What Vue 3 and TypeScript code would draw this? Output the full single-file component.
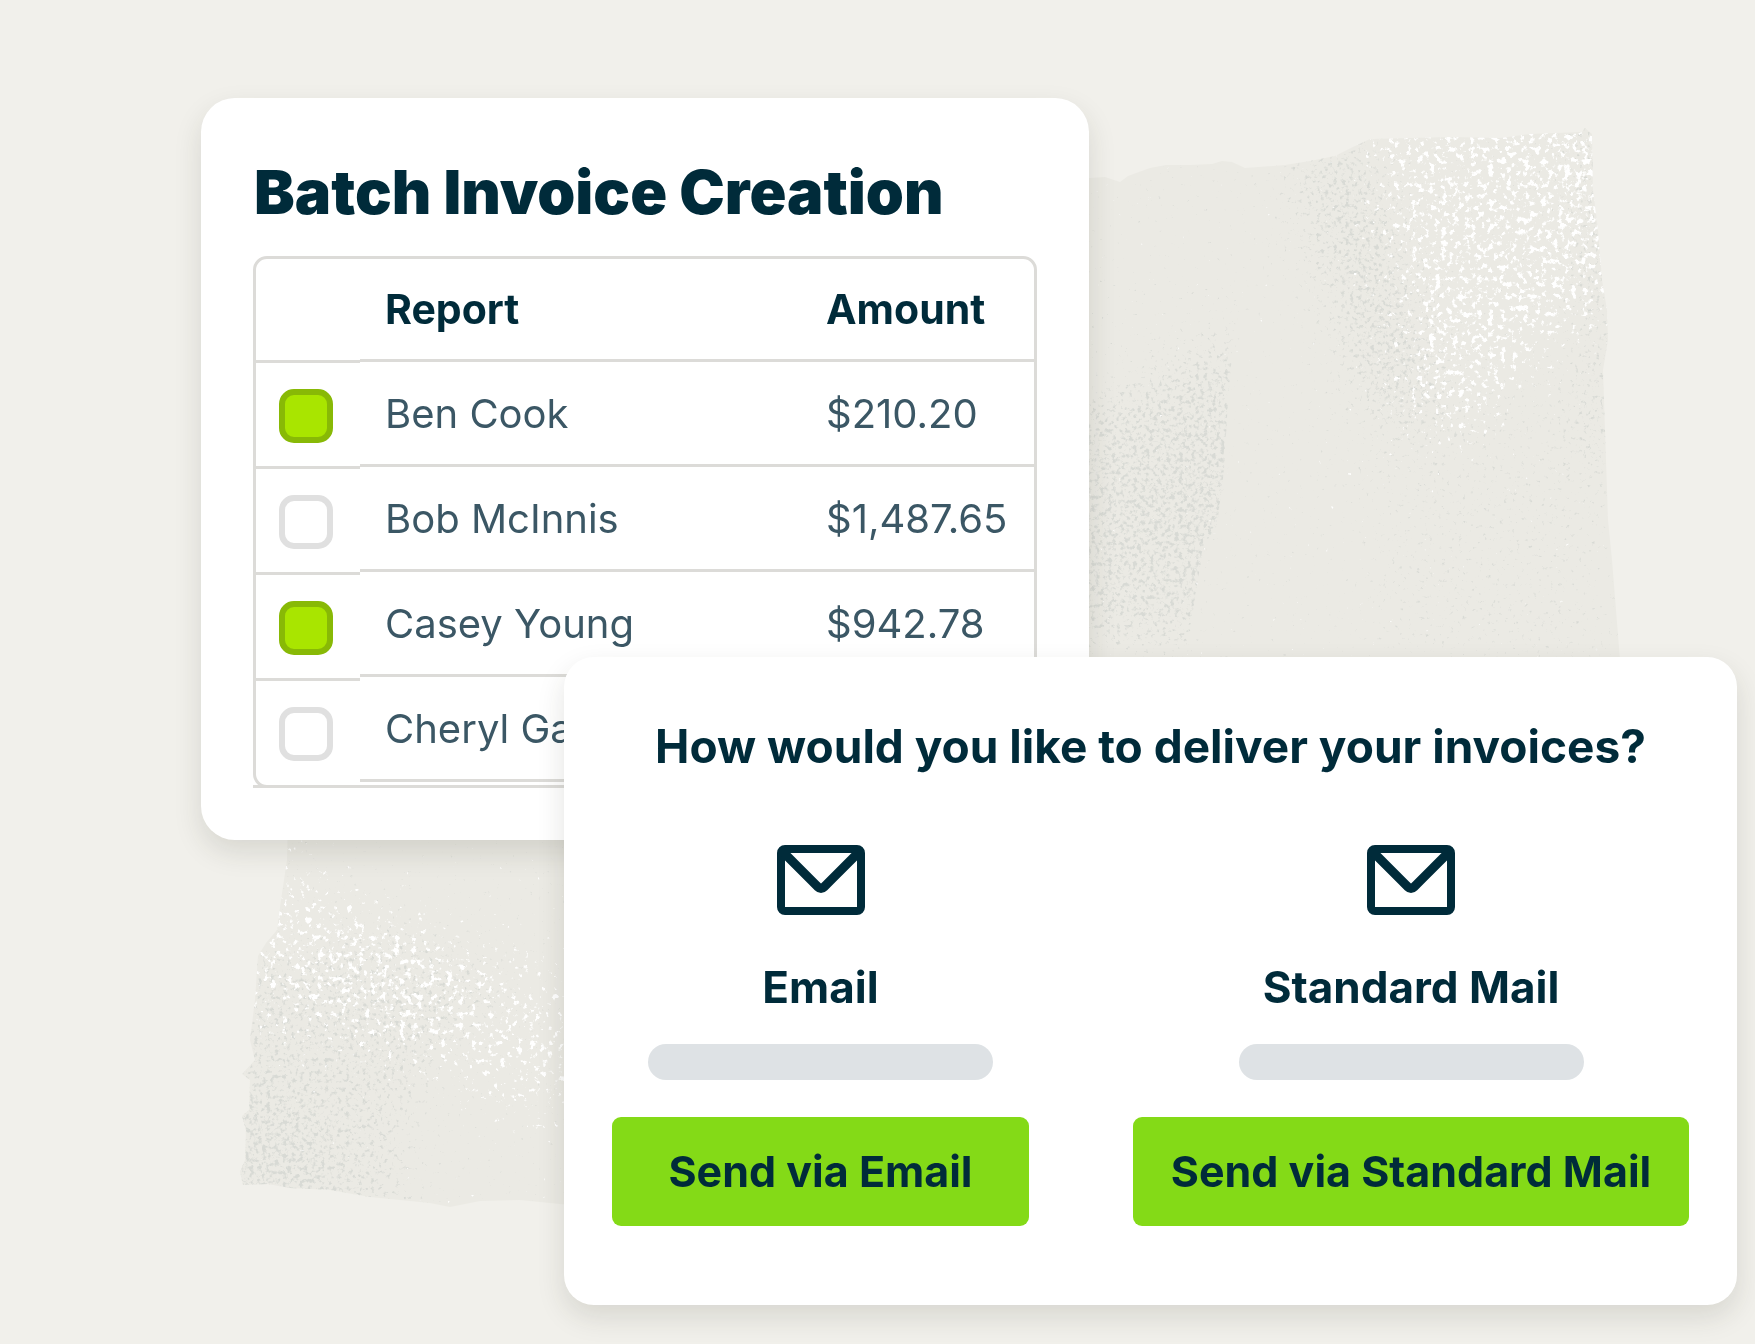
<script setup lang="ts">
import { ref } from 'vue'

interface Report {
  id: string
  name: string
  amount: string
  selected: boolean
}

interface Delivery {
  id: string
  label: string
  action: string
}

const reports = ref<Report[]>([
  { id: 'ben', name: 'Ben Cook', amount: '$210.20', selected: true },
  { id: 'bob', name: 'Bob McInnis', amount: '$1,487.65', selected: false },
  { id: 'casey', name: 'Casey Young', amount: '$942.78', selected: true },
  { id: 'cheryl', name: 'Cheryl Ga', amount: '', selected: false },
])

const deliveries: Delivery[] = [
  { id: 'email', label: 'Email', action: 'Send via Email' },
  { id: 'mail', label: 'Standard Mail', action: 'Send via Standard Mail' },
]
</script>

<template>
  <main class="stage">
    <svg class="paper" viewBox="0 0 1755 1344" preserveAspectRatio="none" aria-hidden="true">
      <defs>
        <clipPath id="sheet">
          <path
            d="M1060 180L1105 177L1120 182L1128 176L1150 168L1166 165L1190 165L1212 164L1222 161L1232 162L1245 168L1285 165L1310 161L1335 156L1355 146L1370 139L1450 137L1500 138L1530 134L1582 132L1585 128L1592 134L1593 190L1598 230L1602 280L1607 310L1608 340L1603 370L1605 430L1608 520L1612 560L1620 660L1620 900L1060 900Z"
          />
          <path
            d="M288 820L287 860L281 900L277 930L266 943L258 956L255 1000L250 1040L255 1060L242 1074L250 1080L249 1110L242 1116L246 1130L245 1160L240 1172L243 1185L268 1184L290 1188L330 1190L370 1197L430 1203L450 1207L480 1201L520 1200L580 1206L580 820Z"
          />
        </clipPath>
        <clipPath id="inset">
          <path d="M1060 280L1170 283L1238 292L1233 340L1228 400L1224 470L1217 525L1204 545L1196 590L1186 660L1060 660Z" />
        </clipPath>
        <filter id="white-grain" x="0" y="0" width="1755" height="1344" filterUnits="userSpaceOnUse" color-interpolation-filters="sRGB">
          <feGaussianBlur in="SourceAlpha" stdDeviation="30" result="area" />
          <feTurbulence type="fractalNoise" baseFrequency="0.17" numOctaves="4" seed="4" result="noise" />
          <feComposite in="area" in2="noise" operator="arithmetic" k2="0.3" k3="1" k4="-0.2" />
          <feComponentTransfer result="specks">
            <feFuncA type="linear" slope="9" intercept="-5.5" />
          </feComponentTransfer>
          <feFlood flood-color="#ffffff" />
          <feComposite in2="specks" operator="in" />
        </filter>
        <filter id="grey-grain" x="0" y="0" width="1755" height="1344" filterUnits="userSpaceOnUse" color-interpolation-filters="sRGB">
          <feGaussianBlur in="SourceAlpha" stdDeviation="24" result="area" />
          <feTurbulence type="fractalNoise" baseFrequency="0.24" numOctaves="4" seed="11" result="noise" />
          <feComposite in="area" in2="noise" operator="arithmetic" k2="0.3" k3="1" k4="-0.2" />
          <feComponentTransfer result="specks">
            <feFuncA type="linear" slope="5" intercept="-2.8" />
          </feComponentTransfer>
          <feFlood flood-color="#d8dad5" />
          <feComposite in2="specks" operator="in" />
        </filter>
      </defs>
      <g clip-path="url(#sheet)">
        <rect width="1755" height="1344" fill="#ebeae4" />
        <g filter="url(#grey-grain)">
          <path d="M1280 150L1370 130L1420 280L1450 420L1360 420L1320 290Z" opacity="0.85" />
          <path d="M1575 100L1620 100L1620 480L1590 480Z" />
          <path d="M1360 400L1600 380L1610 660L1380 660Z" opacity="0.3" />
          <path d="M220 960L380 930L520 980L420 1080L400 1230L200 1230Z" opacity="0.7" />
          <path d="M200 1090L310 1090L340 1240L200 1240Z" opacity="0.8" />
        </g>
        <g clip-path="url(#inset)">
          <g filter="url(#grey-grain)">
            <path d="M1040 420L1260 320L1260 600L1190 650L1040 640Z" opacity="0.85" />
            <path d="M1150 430L1260 400L1250 560L1120 560Z" opacity="0.6" />
          </g>
        </g>
        <g filter="url(#white-grain)">
          <path d="M1350 80L1640 60L1630 300L1530 370L1470 450L1400 440L1390 300Z" opacity="0.88" />
          <path d="M1550 60L1660 60L1640 280L1570 240Z" />
          <path d="M1410 330L1470 300L1490 390L1430 430Z" opacity="0.7" />
          <path d="M270 800L310 880L400 910L480 950L590 970L600 1140L480 1100L380 1060L230 1030L220 900Z" opacity="0.74" />
          <path d="M300 900L430 920L470 1000L400 1040L320 980Z" opacity="0.6" />
        </g>
      </g>
    </svg>

    <section class="card batch">
      <h1>Batch Invoice Creation</h1>
      <div class="grid">
        <ul class="picks">
          <li class="pick-head"></li>
          <li v-for="row in reports" :key="row.id">
            <input :id="row.id" v-model="row.selected" type="checkbox" />
          </li>
        </ul>
        <table>
          <thead>
            <tr>
              <th scope="col">Report</th>
              <th scope="col" class="amount">Amount</th>
            </tr>
          </thead>
          <tbody>
            <tr v-for="row in reports" :key="row.id">
              <td><label :for="row.id">{{ row.name }}</label></td>
              <td class="amount">{{ row.amount }}</td>
            </tr>
          </tbody>
        </table>
      </div>
    </section>

    <section class="card delivery">
      <h2>How would you like to deliver your invoices?</h2>
      <div class="options">
        <div v-for="option in deliveries" :key="option.id" class="option">
          <svg class="envelope" viewBox="0 0 88 70" aria-hidden="true">
            <rect x="4" y="4" width="80" height="62" rx="4" />
            <path d="M7 8L41 42Q44 45 47 42L81 8" stroke-width="9" />
          </svg>
          <h3>{{ option.label }}</h3>
          <span class="placeholder"></span>
          <button type="button">{{ option.action }}</button>
        </div>
      </div>
    </section>
  </main>
</template>

<style>
body {
  margin: 0;
  background: #f1f0eb;
}
</style>

<style scoped>
.stage {
  position: relative;
  display: grid;
  grid-template-columns: 201fr 363fr 525fr 648fr 18fr;
  align-content: start;
  box-sizing: border-box;
  min-height: 100vh;
  padding: 98px 0 39px;
  color: #002b3a;
  font-family: Inter, "Liberation Sans", sans-serif;
}

.paper {
  position: absolute;
  inset: 0;
  width: 100%;
  height: 100%;
}

.card {
  position: relative;
  box-sizing: border-box;
  min-width: 0;
  background: #fff;
  box-shadow: 0 12px 28px rgba(50, 50, 30, 0.13);
}

.batch {
  grid-column: 2 / 4;
  padding: 58px 52px 52px;
  border-radius: 34px;
}

h1,
h2,
h3 {
  margin: 0;
  white-space: nowrap;
}

h1 {
  margin-bottom: 28px;
  padding-left: 1px;
  font-size: 61px;
  font-weight: 900;
  line-height: 72px;
}

.grid {
  position: relative;
  display: flex;
  border: 3px solid #dcdbd8;
  border-radius: 14px;
}

.grid::after {
  content: "";
  position: absolute;
  right: -3px;
  bottom: -3px;
  left: -3px;
  height: 3px;
  background: #dcdbd8;
}

.picks {
  flex: none;
  width: 104px;
  margin: 0;
  padding: 0;
  list-style: none;
}

.picks li {
  display: flex;
  align-items: center;
  box-sizing: border-box;
  height: 106px;
  padding: 2px 0 0 23px;
  border-bottom: 3px solid #dcdbd8;
}

.picks .pick-head {
  height: 104px;
}

.picks li:last-child {
  height: 104px;
  border-bottom: 0;
}

input {
  appearance: none;
  box-sizing: border-box;
  width: 54px;
  height: 54px;
  margin: 0;
  border: 6px solid #e0e0e0;
  border-radius: 15px;
  background: #fff;
}

input:checked {
  border-color: #88b906;
  background: #a9e500;
}

table {
  flex: 1;
  align-self: flex-start;
  border-collapse: separate;
  border-spacing: 0;
  table-layout: fixed;
}

th,
td {
  box-sizing: border-box;
  height: 105px;
  padding: 2px 0 0 25px;
  border-bottom: 3px solid #dcdbd8;
  font-size: 40px;
  line-height: 48px;
  text-align: left;
  white-space: nowrap;
}

th {
  height: 103px;
  padding-top: 0;
  font-size: 41px;
  font-weight: 700;
}

td {
  color: #3b5765;
  font-weight: 400;
}

th.amount,
td.amount {
  width: 208px;
  padding-left: 0;
}

.delivery {
  grid-column: 3 / 5;
  margin-top: -183px;
  padding: 57px 48px 79px;
  border-radius: 30px;
}

h2 {
  font-size: 46px;
  font-weight: 700;
  line-height: 64px;
  text-align: center;
}

.options {
  display: grid;
  grid-template-columns: 3fr 4fr;
  column-gap: 104px;
  margin-top: 67px;
}

.option {
  display: flex;
  flex-direction: column;
  align-items: center;
}

.envelope {
  width: 88px;
  height: 70px;
  fill: none;
  stroke: #002b3a;
  stroke-width: 8;
  stroke-linejoin: round;
}

h3 {
  margin-top: 40px;
  font-size: 44px;
  font-weight: 700;
  line-height: 64px;
}

.placeholder {
  width: 345px;
  height: 36px;
  margin-top: 25px;
  border-radius: 18px;
  background: #dee2e5;
}

button {
  width: 100%;
  height: 109px;
  margin-top: 37px;
  padding: 0 0 2px;
  border: 0;
  border-radius: 9px;
  background: #84da17;
  color: #002b3a;
  font: 700 43px/52px Inter, "Liberation Sans", sans-serif;
  white-space: nowrap;
}
</style>
